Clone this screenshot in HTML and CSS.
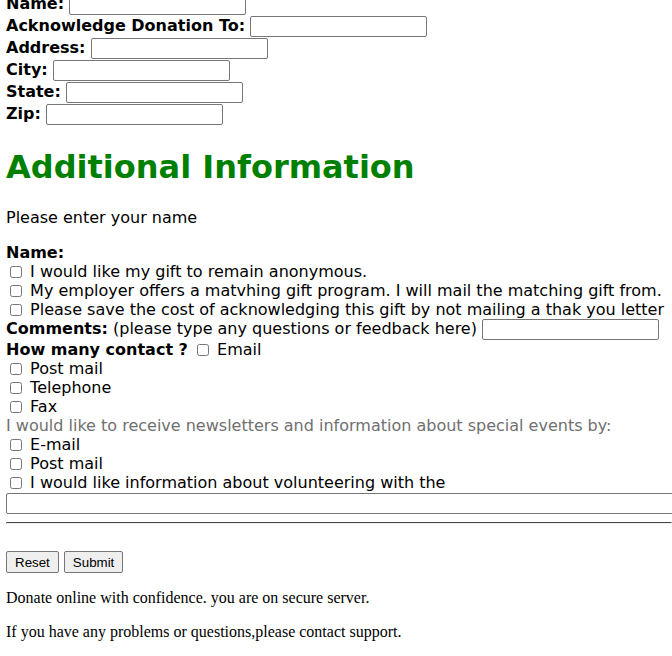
FILE: index.html
```html
<!DOCTYPE html>
<html>
<head>
<meta charset="utf-8">
<title>Donation</title>
<link rel="stylesheet" href="styles.css">
</head>
<body>
<form class="donate">
  <div class="fields">
    <b>Name:</b> <input type="text" class="field"><br>
    <b>Acknowledge Donation To:</b> <input type="text" class="field"><br>
    <b>Address:</b> <input type="text" class="field"><br>
    <b>City:</b> <input type="text" class="field"><br>
    <b>State:</b> <input type="text" class="field"><br>
    <b>Zip:</b> <input type="text" class="field">
  </div>
  <h1 class="title">Additional Information</h1>
  <p class="intro">Please enter your name</p>
  <div class="options">
    <b>Name:</b><br>
    <input type="checkbox" class="cb"> I would like my gift to remain anonymous.<br>
    <input type="checkbox" class="cb"> My employer offers a matvhing gift program. I will mail the matching gift from.<br>
    <input type="checkbox" class="cb"> Please save the cost of acknowledging this gift by not mailing a thak you letter<br>
    <b>Comments:</b> (please type any questions or feedback here) <input type="text" class="field"><br>
    <b>How many contact ?</b> <input type="checkbox" class="cb"> Email<br>
    <input type="checkbox" class="cb"> Post mail<br>
    <input type="checkbox" class="cb"> Telephone<br>
    <input type="checkbox" class="cb"> Fax<br>
    <span class="muted">I would like to receive newsletters and information about special events by:</span><br>
    <input type="checkbox" class="cb"> E-mail<br>
    <input type="checkbox" class="cb"> Post mail<br>
    <input type="checkbox" class="cb"> I would like information about volunteering with the<br>
    <input type="text" class="wide">
  </div>
  <hr class="rule">
  <div class="actions">
    <button type="reset" class="btn">Reset</button>
    <button type="submit" class="btn">Submit</button>
  </div>
  <p class="note">Donate online with confidence. you are on secure server.</p>
  <p class="note">If you have any problems or questions,please contact support.</p>
</form>
</body>
</html>
```

FILE: styles.css
```css
html, body {
  overflow: hidden;
}
body {
  margin: 0 0 0 6px;
  background: #fff;
  color: #000;
  font-family: "DejaVu Sans", Verdana, sans-serif;
  font-size: 16px;
}
.donate {
  margin-top: -7px;
}
.fields {
  line-height: 22px;
}
.field {
  width: 171px;
  height: 17px;
  padding: 1px 2px;
  border: 1px solid #767676;
  border-radius: 2px;
  font-size: 13px;
  vertical-align: baseline;
  margin: 0;
}
.title {
  color: #008000;
  font-size: 32px;
  margin: 24px 0 22px;
  line-height: 37px;
}
.intro {
  margin: 0 0 16px;
}
.options {
  line-height: 19px;
  white-space: nowrap;
}
.cb {
  width: 12px;
  height: 12px;
  margin: 3px 3px 3px 4px;
  vertical-align: -1px;
}
.muted {
  color: #707070;
}
.wide {
  display: block;
  width: 100%;
  height: 17px;
  padding: 1px 2px;
  border: 1px solid #767676;
  border-radius: 2px;
  margin: 1px 0 0;
  font-size: 13px;
}
.rule {
  margin: 8px 0;
  border: 1px inset #eee;
  border-top-color: #9a9a9a;
}
.actions {
  margin-top: 27px;
  display: flex;
  gap: 5px;
}
.btn {
  font-family: "Liberation Sans", Arial, sans-serif;
  font-size: 13.33px;
  height: 22px;
  padding: 1px 8px;
  border: 1px solid #767676;
  border-radius: 2px;
  background: #efefef;
  color: #000;
}
.note {
  font-family: "Liberation Serif", "Times New Roman", serif;
  font-size: 16px;
  margin: 16px 0;
}
```
